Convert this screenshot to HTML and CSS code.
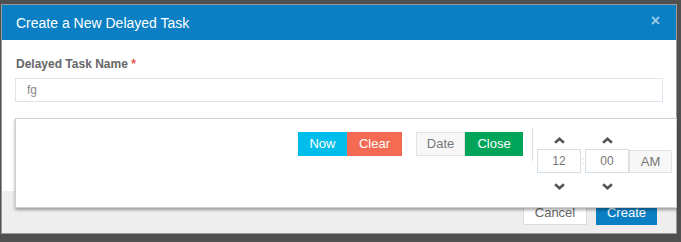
FILE: index.html
```html
<!DOCTYPE html>
<html lang="en">
<head>
  <meta charset="UTF-8" />
  <title>Create a New Delayed Task</title>
  <link rel="stylesheet" href="styles.css">
</head>
<body>
  <div class="modal">
    <div class="modal-header">
      <span class="modal-title">Create a New Delayed Task</span>
      <span class="close">&times;</span>
    </div>
    <div class="modal-body">
      <label class="label">Delayed Task Name <span class="req">*</span></label>
      <div class="input">fg</div>
      <div class="input input-date"></div>
    </div>
    <div class="modal-footer">
      <div class="btn btn-default">Cancel</div>
      <div class="btn btn-primary">Create</div>
    </div>

    <div class="picker">
      <div class="btn-group">
        <div class="pbtn now">Now</div>
        <div class="pbtn clear">Clear</div>
      </div>
      <div class="btn-group">
        <div class="pbtn date">Date</div>
        <div class="pbtn close-btn">Close</div>
      </div>
      <div class="divider"></div>
      <div class="time">
        <div class="col">
          <svg class="chev up" viewBox="0 0 10 6"><path d="M1 5 L5 1.5 L9 5" /></svg>
          <div class="tbox">12</div>
          <svg class="chev down" viewBox="0 0 10 6"><path d="M1 1 L5 4.5 L9 1" /></svg>
        </div>
        <div class="sep">:</div>
        <div class="col">
          <svg class="chev up" viewBox="0 0 10 6"><path d="M1 5 L5 1.5 L9 5" /></svg>
          <div class="tbox">00</div>
          <svg class="chev down" viewBox="0 0 10 6"><path d="M1 1 L5 4.5 L9 1" /></svg>
        </div>
        <div class="ampm">AM</div>
      </div>
    </div>
  </div>
</body>
</html>
```
FILE: styles.css
```css
html, body {
  margin: 0; padding: 0; height: 100%;
  overflow: hidden;
}
body {
  background: #505050;
  font-family: 'Liberation Sans', Arial, sans-serif;
  padding-top: 5px;
  box-sizing: border-box;
}
.modal {
  position: relative;
  margin-left: 2px;
  width: 674px;
  background: #fff;
  box-shadow: 0 0 0 1px #9a9a9a;
}
.modal-header {
  height: 35px;
  background: #0a7fc4;
  display: flex; align-items: center; justify-content: space-between;
  padding: 0 16px 0 14px;
  color: #fff;
}
.modal-title { font-size: 14px; }
.close {
  font-size: 16px; font-weight: bold;
  color: rgba(255,255,255,0.6);
  margin-top: -4px;
}
.modal-body {
  padding: 17px 13px 0 13px;
  height: 151px;
  box-sizing: border-box;
}
.label {
  display: block;
  font-size: 12px; font-weight: bold;
  color: #666;
  margin-left: 1px;
  margin-bottom: 7px;
}
.req { color: #e4534d; }
.input {
  height: 22px;
  border: 1px solid #dde3ea;
  font-size: 12px; color: #888;
  line-height: 22px;
  padding-left: 11px;
}
.input-date { margin-top: 16px; }
.modal-footer {
  height: 42px;
  background: #eeeeee;
  display: flex; justify-content: flex-end; align-items: flex-start;
  gap: 9px;
  padding: 10px 19px 0 0;
  box-sizing: border-box;
}
.btn {
  height: 24px; line-height: 24px;
  font-size: 13px;
  box-sizing: border-box;
  text-align: center;
}
.btn-default {
  background: #fff; color: #666;
  border: 1px solid #ddd;
  line-height: 22px;
  width: 64px;
}
.btn-primary {
  background: #0a7fc4; color: #fff;
  width: 61px;
}
.picker {
  position: absolute;
  left: 13px; top: 113px;
  width: 656px; height: 88px;
  background: #fff;
  border: 1px solid #cfcfcf;
  box-shadow: 0 2px 3px rgba(0,0,0,0.35);
  display: flex; justify-content: flex-end; align-items: flex-start;
  padding-right: 4px;
}
.btn-group { display: flex; margin-top: 13px; margin-right: 14px; }
.btn-group + .btn-group { margin-right: 9px; }
.pbtn {
  height: 24px; line-height: 24px;
  font-size: 13px; color: #fff;
  text-align: center;
  box-sizing: border-box;
}
.now { background: #00bdec; width: 49px; }
.clear { background: #f46a52; width: 55px; }
.date {
  background: #f7f7f7; color: #777;
  border: 1px solid #e2e2e2;
  line-height: 22px;
  width: 49px;
}
.close-btn { background: #00a55a; width: 58px; }
.divider {
  width: 1px; height: 33px;
  background: #e0e0e0;
  margin-top: 9px;
  margin-right: 4px;
}
.time {
  display: flex; align-items: flex-start;
  margin-top: 18px;
}
.col {
  display: flex; flex-direction: column; align-items: center;
}
.chev {
  width: 11px; height: 7px;
  fill: none; stroke: #555; stroke-width: 2.4;
}
.chev.up { margin-bottom: 5px; }
.chev.down { margin-top: 10px; }
.tbox {
  width: 42px; height: 22px;
  border: 1px solid #d4dee6;
  font-size: 12px; color: #777;
  line-height: 22px; text-align: center;
}
.sep {
  width: 4px; text-align: center;
  font-size: 11px; color: #ccc;
  margin-top: 17px;
}
.ampm {
  width: 41px; height: 21px;
  border: 1px solid #e2e2e2;
  background: #f7f7f7;
  font-size: 13px; color: #777;
  line-height: 21px; text-align: center;
  margin-top: 13px;
}
```
